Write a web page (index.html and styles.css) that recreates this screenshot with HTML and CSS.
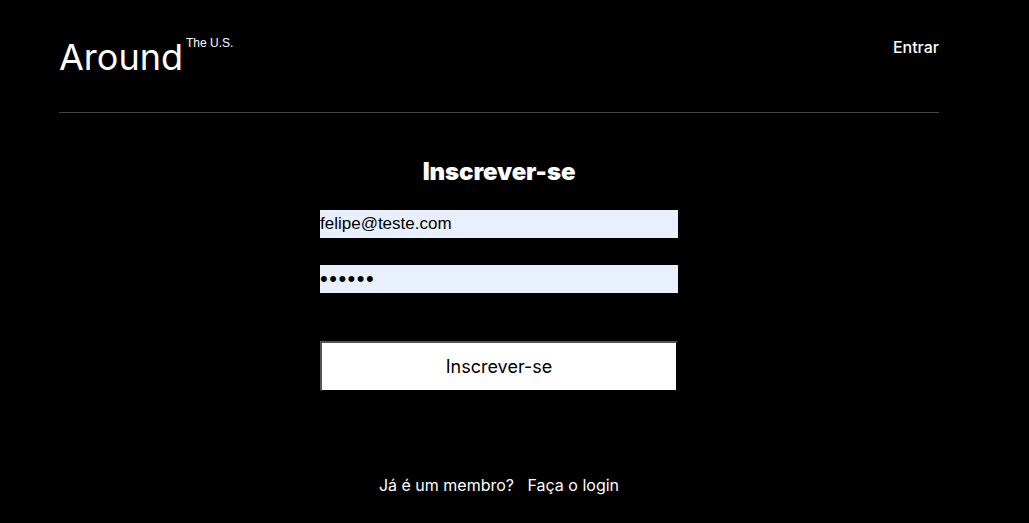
FILE: index.html
```html
<!DOCTYPE html>
<html lang="pt">
<head>
<meta charset="utf-8">
<title>Around</title>
<link rel="stylesheet" href="styles.css">
</head>
<body>
<div class="page">
  <header class="header">
    <div class="brand">
      <span class="logo">Around</span>
      <span class="tag">The U.S.</span>
    </div>
    <a class="nav-link" href="#">Entrar</a>
  </header>
  <main class="main">
    <h1 class="title">Inscrever-se</h1>
    <form class="form">
      <input class="field" type="email" value="felipe@teste.com">
      <input class="field field-pass" type="password" value="123456">
      <button class="submit" type="button">Inscrever-se</button>
    </form>
    <p class="footer-text">Já é um membro?&nbsp;&nbsp; Faça o login</p>
  </main>
</div>
</body>
</html>
```
FILE: styles.css
```css
html, body {
  margin: 0;
  padding: 0;
  background: #000;
  color: #fff;
  height: 100%;
}
body {
  font-family: Inter, "Liberation Sans", sans-serif;
}
.page {
  width: 880px;
  margin-left: 59px;
}
.header {
  display: flex;
  justify-content: space-between;
  align-items: flex-start;
  height: 113px;
  border-bottom: 1px solid #444;
  box-sizing: border-box;
}
.brand {
  display: flex;
  align-items: flex-start;
  padding-top: 35px;
}
.logo {
  font-size: 36px;
  line-height: 44px;
  font-weight: 400;
}
.tag {
  font-family: "Liberation Sans", Arial, sans-serif;
  font-size: 12px;
  margin-left: 3px;
  margin-top: 1px;
}
.nav-link {
  color: #fff;
  text-decoration: none;
  font-size: 16px;
  font-weight: 500;
  margin-top: 37px;
}
.main {
  display: flex;
  flex-direction: column;
  align-items: center;
}
.title {
  margin: 44px 0 0;
  font-size: 24px;
  line-height: 30px;
  font-weight: 900;
  letter-spacing: -0.1px;
}
.form {
  display: flex;
  flex-direction: column;
  align-items: flex-start;
  margin-top: 23px;
  width: 358px;
}
.field {
  width: 358px;
  height: 28px;
  box-sizing: border-box;
  border: none;
  padding: 0;
  background: #e8f0fe;
  color: #000;
  font-family: "Liberation Sans", Arial, sans-serif;
  font-size: 17px;
  margin-bottom: 27px;
  outline: none;
}
.field-pass {
  font-size: 22px;
  letter-spacing: 1.5px;
}
.submit {
  margin-top: 21px;
  width: 358px;
  height: 50px;
  box-sizing: border-box;
  background: #fff;
  color: #000;
  border-style: solid;
  border-width: 2px 2px 1px 2px;
  border-color: #555 #000 #000 #555;
  font-family: Inter, sans-serif;
  font-size: 18px;
  padding: 0;
}
.footer-text {
  margin: 84px 0 0;
  font-size: 16px;
  font-weight: 400;
}
```
